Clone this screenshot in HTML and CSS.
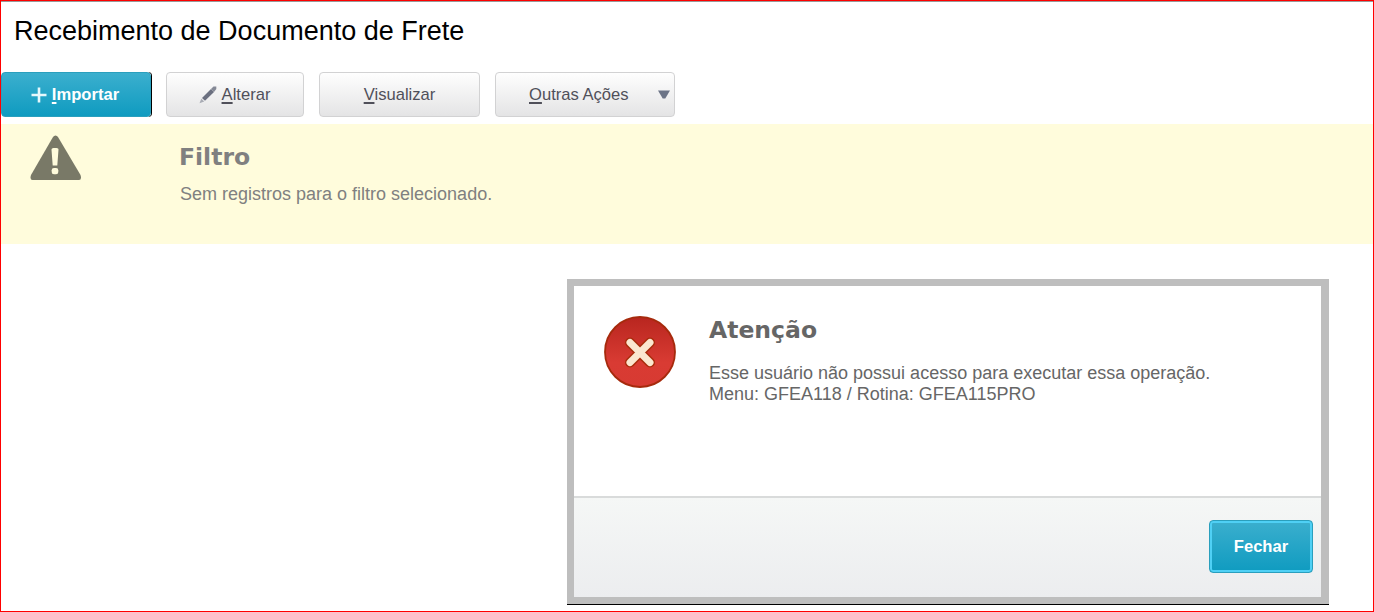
FILE: index.html
```
<!DOCTYPE html>
<html lang="pt-BR">
<head>
    <meta charset="UTF-8">
    <title>Recebimento de Documento de Frete</title>
    <link rel="stylesheet" href="styles.css">
</head>
<body>
    <div class="page">
        <h1>Recebimento de Documento de Frete</h1>

        <div class="toolbar">
            <button class="btn primary import">
                <svg class="plus" width="16" height="16" viewBox="0 0 16 16"><path d="M8 0.5v15M0.5 8h15" stroke="#e6f8fc" stroke-width="2.6"/></svg>
                <span><u>I</u>mportar</span>
            </button>
            <button class="btn edit">
                <svg class="pencil" width="18" height="18" viewBox="0 0 18 18">
                    <path d="M3 12L12 3l3 3L6 14.800z" fill="#6b7080"/>
                    <path d="M12 3L14.500 0.500h2.800v2.500L15 6z" fill="#858996"/>
                    <path d="M2.300 12.700L5.200 15.500 0.500 17.300z" fill="#a9acb5"/>
                </svg>
                <span><u>A</u>lterar</span>
            </button>
            <button class="btn view"><span><u>V</u>isualizar</span></button>
            <button class="btn more">
                <span><u>O</u>utras Ações</span>
                <svg class="arrow" width="12" height="10" viewBox="0 0 12 10"><path d="M0 0.500h12L7.300 8.500H4.700z" fill="#6c7487"/></svg>
            </button>
        </div>

        <div class="notice">
            <svg class="warning" width="52" height="46" viewBox="0 0 52 46">
                <path d="M25.500 0.500Q27 0.500 28 2L50.500 40Q52 45 49 45H2.500Q-0.500 45 1 40L23 2Q24 0.500 25.500 0.500z" fill="#797967"/>
                <path d="M21.500 14.500Q21.500 13 23.500 13h3Q28.700 13 28.500 14.500L27.300 30.500h-4.600z" fill="#fffcdc"/>
                <rect x="21.700" y="33" width="6.600" height="6.300" rx="2.300" fill="#fffcdc"/>
            </svg>
            <div>
                <h2>Filtro</h2>
                <p>Sem registros para o filtro selecionado.</p>
            </div>
        </div>

        <div class="dialog">
            <div class="dialog-body">
                <svg class="error" width="72" height="72" viewBox="0 0 72 72">
                    <defs>
                        <linearGradient id="red" x1="0" y1="0" x2="0" y2="1">
                            <stop offset="0" stop-color="#b8261f"/>
                            <stop offset="0.650" stop-color="#d93b33"/>
                            <stop offset="1" stop-color="#d73a32"/>
                        </linearGradient>
                    </defs>
                    <circle cx="36" cy="36" r="35" fill="url(#red)" stroke="#a62a0c" stroke-width="1.800"/>
                    <path d="M26 26.500l20 20M46 26.500l-20 20" stroke="#a92c0c" stroke-width="10" stroke-linecap="round"/>
                    <path d="M26 26.500l20 20M46 26.500l-20 20" stroke="#fbe7d0" stroke-width="7" stroke-linecap="round"/>
                </svg>
                <div class="message">
                    <h2>Atenção</h2>
                    <p>Esse usuário não possui acesso para executar essa operação.<br>Menu: GFEA118 / Rotina: GFEA115PRO</p>
                </div>
            </div>
            <div class="dialog-footer">
                <button class="btn primary close">Fechar</button>
            </div>
        </div>
    </div>
</body>
</html>
```
FILE: styles.css
```
body {
    margin: 0;
    background-color: #fff;
    font-family: "Liberation Sans", Arial, sans-serif;
}
.page {
    box-sizing: border-box;
    width: 1374px;
    height: 612px;
    border: 1px solid #f00;
    box-shadow: inset 0 1px 0 #999;
    overflow: hidden;
}
h1 {
    margin: 0;
    padding: 14px 0 0 13px;
    height: 57px;
    font-size: 27px;
    font-weight: normal;
    line-height: 32px;
    color: #000;
}
h2 {
    margin: 0;
    font-family: "Arial Black", "DejaVu Sans", sans-serif;
    font-weight: bold;
    font-size: 23.5px;
    line-height: 28px;
    text-indent: -1px;
}
p {
    margin: 0;
    font-size: 18px;
    line-height: 21px;
}

.toolbar {
    display: flex;
    height: 45px;
}
.btn {
    box-sizing: border-box;
    display: flex;
    align-items: center;
    justify-content: center;
    height: 45px;
    margin: 0;
    padding: 0;
    border: 1px solid #d2d2d3;
    border-radius: 4px;
    background: linear-gradient(#fefefe, #e4e4e5);
    font-family: inherit;
    font-size: 16.6px;
    color: #50505a;
}
.btn u {
    text-decoration-thickness: 2px;
    text-underline-offset: 2px;
}
.primary {
    border-color: #2a9fbd;
    background: linear-gradient(#3bafce, #0f9bc0);
    font-weight: bold;
    color: #fff;
}
.import {
    width: 150px;
    padding-right: 2px;
    box-shadow: 1px 0 0 #000;
}
.plus {
    margin-right: 5px;
}
.edit {
    width: 138px;
    margin-left: 15px;
    padding-right: 1px;
}
.pencil {
    margin-right: 5px;
}
.view {
    width: 161px;
    margin-left: 15px;
}
.more {
    width: 180px;
    margin-left: 15px;
    padding-left: 33px;
    padding-right: 4px;
    justify-content: space-between;
}

.notice {
    display: flex;
    box-sizing: border-box;
    height: 120px;
    margin-top: 7px;
    padding: 11px 0 0 29px;
    background-color: #fffcdc;
    color: #808080;
}
.warning {
    margin-right: 98px;
}
.notice h2 {
    margin-top: 8px;
}
.notice p {
    margin-top: 13px;
}

.dialog {
    box-sizing: border-box;
    width: 762px;
    height: 325px;
    margin: 35px 0 0 566px;
    border: 7px solid #bebebe;
    border-right-width: 8px;
    box-shadow: 0 1px 0 #000;
    display: flex;
    flex-direction: column;
    color: #666;
}
.dialog-body {
    flex: 1;
    display: flex;
    padding: 30px 0 0 30px;
}
.message {
    margin-left: 33px;
}
.message h2 {
    text-indent: 0;
}
.message p {
    margin-top: 19px;
}
.dialog-footer {
    box-sizing: border-box;
    height: 101px;
    padding: 22px 8px 0 0;
    border-top: 2px solid #d9dbdb;
    background: linear-gradient(#f5f7f6, #ecedef);
    display: flex;
    justify-content: flex-end;
}
.close {
    width: 104px;
    height: 53px;
    box-shadow: inset 0 0 0 2px #4fd0f5;
}
```
